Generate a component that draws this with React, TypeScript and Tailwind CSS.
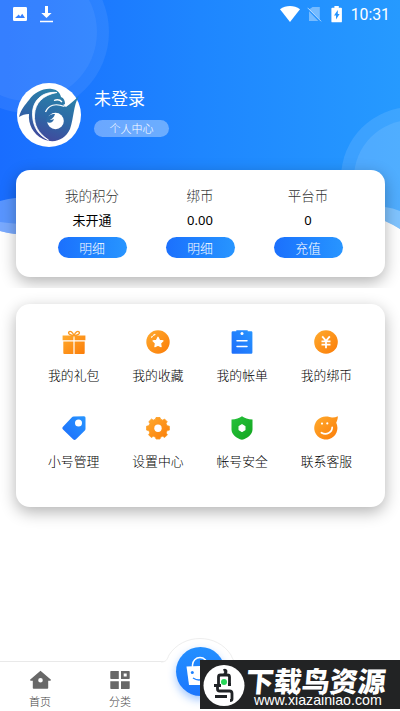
import React from 'react';

interface Balance {
    label: string;
    value: string;
    action: string;
}

interface MenuItem {
    label: string;
    icon: React.ReactNode;
}

const balances: Balance[] = [
    { label: '我的积分', value: '未开通', action: '明细' },
    { label: '绑币', value: '0.00', action: '明细' },
    { label: '平台币', value: '0', action: '充值' },
];

const menu: MenuItem[] = [
    { label: '我的礼包', icon: <GiftIcon /> },
    { label: '我的收藏', icon: <StarIcon /> },
    { label: '我的帐单', icon: <BillIcon /> },
    { label: '我的绑币', icon: <CoinIcon /> },
    { label: '小号管理', icon: <TagIcon /> },
    { label: '设置中心', icon: <GearIcon /> },
    { label: '帐号安全', icon: <ShieldIcon /> },
    { label: '联系客服', icon: <SmileIcon /> },
];

function Gradients() {
    return (
        <svg className="absolute" width="0" height="0">
            <defs>
                <linearGradient id="orange" x1="0" y1="0" x2="1" y2="1">
                    <stop offset="0" stopColor="#ffab2e" />
                    <stop offset="1" stopColor="#fb7c08" />
                </linearGradient>
                <linearGradient id="blue" x1="0" y1="1" x2="1" y2="0">
                    <stop offset="0" stopColor="#1d6dfb" />
                    <stop offset="1" stopColor="#2795ff" />
                </linearGradient>
                <linearGradient id="green" x1="0" y1="0" x2="1" y2="1">
                    <stop offset="0" stopColor="#27c23c" />
                    <stop offset="1" stopColor="#12a51f" />
                </linearGradient>
                <linearGradient id="dolphin" x1="0.2" y1="1" x2="0.6" y2="0">
                    <stop offset="0" stopColor="#46429a" />
                    <stop offset="0.5" stopColor="#2d68a6" />
                    <stop offset="1" stopColor="#2b83a8" />
                </linearGradient>
            </defs>
        </svg>
    );
}

function GiftIcon() {
    return (
        <svg width="24" height="24" viewBox="0 0 24 24">
            <path d="M12 5.600C10.800 2 8.200 .4 6.900 2c-1.300 1.800 1.600 3.400 5.100 3.600C15.500 5.400 18.400 3.800 17.100 2c-1.300-1.600-3.900 0-5.100 3.600z" fill="none" stroke="#fb9a22" strokeWidth="1.300" />
            <path d="M.6 5.600h10.800v4.600H.6zM12.600 5.600h10.800v4.600H12.600zM1.300 11.400h10.100V24H2.300a1 1 0 0 1-1-1zM12.600 11.400h10.100V23a1 1 0 0 1-1 1h-9.100z" fill="url(#orange)" />
        </svg>
    );
}

function StarIcon() {
    return (
        <svg width="24" height="24" viewBox="0 0 24 24">
            <circle cx="12" cy="12" r="11.700" fill="url(#orange)" />
            <path d="M12 7.200l1.500 3.100 3.500.5-2.500 2.400.6 3.500-3.100-1.600-3.100 1.600.6-3.500L7 10.800l3.500-.5z" fill="#fff" stroke="#fff" strokeWidth="1.200" strokeLinejoin="round" />
            <path d="M5.600 7.200l.7-.8M7.500 5.300l1.400-.9" stroke="#fff" strokeWidth="1.200" strokeLinecap="round" />
        </svg>
    );
}

function BillIcon() {
    return (
        <svg width="24" height="24" viewBox="0 0 24 24">
            <path d="M2.800 1.200H6.300V.3h11.400v.9h3.500a1.200 1.200 0 0 1 1.200 1.200v20.200a1.200 1.200 0 0 1-1.200 1.200H2.800a1.200 1.200 0 0 1-1.200-1.200V2.400a1.200 1.200 0 0 1 1.200-1.200z" fill="url(#blue)" />
            <circle cx="12" cy="3.600" r="1.500" fill="#fff" />
            <path d="M7 10.700h10M7 16.500h10" stroke="#fff" strokeWidth="1.500" strokeLinecap="round" />
        </svg>
    );
}

function CoinIcon() {
    return (
        <svg width="24" height="24" viewBox="0 0 24 24">
            <circle cx="12" cy="12" r="11.800" fill="url(#orange)" />
            <path d="M8.200 6.400l3.800 4.500 3.800-4.500M7.500 11.400h9M7.500 14.600h9M12 11v7.300" fill="none" stroke="#fff" strokeWidth="1.800" />
        </svg>
    );
}

function TagIcon() {
    return (
        <svg width="24" height="24" viewBox="0 0 24 24">
            <path d="M11.700.6L22 .2a1.500 1.500 0 0 1 1.500 1.500v11a3 3 0 0 1-.9 2.100l-8.600 8.400a2 2 0 0 1-2.900 0L1 13.500a2 2 0 0 1 0-2.800L9.700 1.600a3 3 0 0 1 2-1z" fill="url(#blue)" />
            <circle cx="16.500" cy="7" r="3.500" fill="#fff" />
        </svg>
    );
}

function GearIcon() {
    return (
        <svg width="24" height="24" viewBox="0 0 24 24">
            <path d="M9.500 3.200L10 1.500h4l.5 1.700 2.300 1L18.500 3l2.700 2.700-1.100 1.700 1 2.300 2.300.5v3.900l-2.200.5-1 2.300 1.200 1.900-2.700 2.700-2-1.200-2.200.9-.5 1.800h-4l-.5-1.800-2.200-.9-2 1.200-2.700-2.700 1.200-1.900-1-2.300-2.200-.5v-3.900l2.300-.5 1-2.300-1.100-1.700L5.500 3l1.700 1.200z" fill="url(#orange)" stroke="#fb9a22" strokeWidth=".8" strokeLinejoin="round" />
            <circle cx="12" cy="12.200" r="3.700" fill="#fff" />
        </svg>
    );
}

function ShieldIcon() {
    return (
        <svg width="24" height="24" viewBox="0 0 24 24">
            <path d="M12 .2c2.500 1.900 6.200 3.200 10.500 3.400v9.800c0 5-5 8.600-10.500 10.400C6.500 22 1.500 18.400 1.500 13.400V3.600C5.800 3.400 9.500 2.100 12 .2z" fill="url(#green)" />
            <path d="M12 8.700l2.900 1.700v3.400L12 15.500l-2.900-1.700v-3.400z" fill="#fff" stroke="#fff" strokeWidth="1.200" strokeLinejoin="round" />
        </svg>
    );
}

function SmileIcon() {
    return (
        <svg width="24" height="24" viewBox="0 0 24 24">
            <path d="M12 .4c2.700 0 4.500.7 6 1.100 2 .1 4-.3 5.900-1.200-.1 3-1 5-1.700 6.500A11.600 11.600 0 1 1 12 .4z" fill="url(#orange)" />
            <circle cx="8" cy="7.600" r="1.100" fill="#fff" />
            <circle cx="13.300" cy="7.400" r="1.100" fill="#fff" />
            <path d="M7.400 16.700c5 2.900 10.800-.1 10.800-5.400" fill="none" stroke="#fff" strokeWidth="1.700" strokeLinecap="round" />
        </svg>
    );
}

function StatusBar() {
    return (
        <div className="flex h-7 items-center justify-between pl-[13px] pr-[10px] text-white">
            <div className="flex items-center gap-[13px]">
                <svg width="14" height="16" viewBox="0 0 14 16">
                    <path fillRule="evenodd" d="M1.300 1h11.400A1.300 1.300 0 0 1 14 2.300v11.400a1.300 1.300 0 0 1-1.300 1.300H1.300A1.300 1.300 0 0 1 0 13.700V2.300A1.300 1.300 0 0 1 1.300 1zM2 12h10l-2.800-4.200-2 2.600-1.400-1.900z" fill="#fff" />
                </svg>
                <svg width="13" height="18" viewBox="0 0 13 18">
                    <path d="M5 1h3v7h3.600L6.500 13 1.300 8H5zM0 15.700h13v1.600H0z" fill="#fff" />
                </svg>
            </div>
            <div className="flex items-center">
                <svg width="20" height="16" viewBox="0 0 20 16">
                    <path d="M0 3.300C6-1 14-1 20 3.300L10 16z" fill="#fff" />
                </svg>
                <svg className="ml-[7px]" width="15" height="16" viewBox="0 0 15 16">
                    <path d="M5.500 1h7.300v12.500L2 3.600zM2 5.300L11.300 15H2z" fill="#fff" opacity=".38" />
                    <path d="M.6 1.800l13.500 13.500" stroke="#fff" strokeWidth="1" opacity=".6" />
                </svg>
                <svg className="ml-[9px]" width="12" height="17" viewBox="0 0 12 17">
                    <path fillRule="evenodd" d="M3.400 0h4.400v1.700H10a.9.900 0 0 1 .9.900v12.800a.9.900 0 0 1-.9.900H1.300a.9.900 0 0 1-.9-.9V2.600a.9.900 0 0 1 .9-.9h2.100zM6.800 3.900L3 9.600h2v4L8.600 8H6.800z" fill="#fff" />
                </svg>
                <span className="ml-[8px] pt-px font-['Roboto',sans-serif] text-[15.800px] leading-none">10:31</span>
            </div>
        </div>
    );
}

function Avatar() {
    return (
        <svg width="64" height="64" viewBox="0 0 64 64">
            <circle cx="32" cy="32" r="32" fill="#fff" />
            <path d="M2 34C4 26 8 22 12 17 18 9 26 5 35 6c6 1 8 4 9 8 3 1 4 4 4 7l-2 1 3 2c5-4 9-7 13-11-6 10-5 22-9 33-5 11-16 15-27 10-10-5-15-15-14-25-4 0-7 1-10 3z" fill="url(#dolphin)" />
            <circle cx="38.500" cy="38" r="8.300" fill="#fff" />
            <path d="M29 38c1-5 4-7 9-7-1 4-4 6-6 5 2 1 3 1 5 0-1 4-5 5-8 2z" fill="#2d6ca7" />
            <path d="M40 9.500C25 8 15 18 15.500 32c.5 13 7 21 16 25C21 50 17 42 17.500 32 18 20 26 12 40 9.500z" fill="#fff" stroke="#fff" strokeWidth=".8" />
            <path d="M28.500 29c3-7 10-9 19-5.500M37 17.500q5-2 8 1.500" stroke="#fff" strokeWidth="1.300" fill="none" />
        </svg>
    );
}

// blue backdrop with the bubbles and the wave along its lower edge
function Backdrop() {
    return (
        <svg className="absolute left-0 top-0" width="400" height="240" viewBox="0 0 400 240">
            <defs>
                <linearGradient id="sky" x1="0" y1="0" x2="1" y2="0">
                    <stop offset="0" stopColor="#196dff" />
                    <stop offset="0.5" stopColor="#1e86ff" />
                    <stop offset="1" stopColor="#269aff" />
                </linearGradient>
                <clipPath id="wave">
                    <path d="M0 0h400v229q-8-5-15-8L200 190 15 234q-8-1-15-3z" />
                </clipPath>
            </defs>
            <g clipPath="url(#wave)">
                <path d="M0 0h400v240H0z" fill="url(#sky)" />
                <circle cx="28" cy="32" r="81" fill="#fff" opacity=".07" />
                <circle cx="28" cy="32" r="69" fill="#fff" opacity=".06" />
                <circle cx="412" cy="178" r="71" fill="#fff" opacity=".11" />
                <circle cx="412" cy="178" r="58" fill="#fff" opacity=".1" />
                <path d="M0 201q7-2 15-3l100 0 200-5 70 14q8 1 15 4v30H0z" fill="#fff" opacity=".28" />
                <path d="M0 222q8 1 20 2v20H0z" fill="#fff" opacity=".2" />
            </g>
        </svg>
    );
}

function Profile() {
    return (
        <div className="flex gap-[13px] pl-[17px] pt-[55px] text-white">
            <Avatar />
            <div className="pt-[2px]">
                <p className="text-[17px] leading-[26px]">未登录</p>
                <div className="mt-[9px] flex h-[17px] w-[75px] items-center justify-center rounded-full bg-white/35 text-[11px] font-light">个人中心</div>
            </div>
        </div>
    );
}

function BalanceCard() {
    return (
        <div className="overflow-hidden px-[15.500px] pb-[11px] pt-[23px]">
            <div className="flex h-[107px] justify-center gap-[39px] rounded-[14px] bg-white pt-[15px] shadow-[0_5px_16px_rgba(0,0,0,0.3)]">
                {balances.map((item) => (
                    <div key={item.label} className="flex w-[69px] flex-col items-center">
                        <span className="text-[13.500px] font-light leading-5 text-[#333]">{item.label}</span>
                        <span className="mt-[5px] font-['Noto_Sans','Noto_Sans_CJK_SC',sans-serif] text-[13px] leading-5 text-black">{item.value}</span>
                        <button className="mt-[7px] flex h-[21px] w-[69px] items-center justify-center rounded-full bg-linear-to-r from-[#1c70fd] to-[#2895ff] text-[12.800px] font-light text-white">{item.action}</button>
                    </div>
                ))}
            </div>
        </div>
    );
}

function MenuCard() {
    return (
        <div className="mx-[15.500px] mt-[15.500px] grid h-[203.500px] grid-cols-4 content-start gap-y-[17px] rounded-[14px] bg-white px-[16px] pt-[26px] shadow-[0_5px_16px_rgba(0,0,0,0.3)]">
            {menu.map((item) => (
                <div key={item.label} className="flex h-[69px] flex-col items-center">
                    {item.icon}
                    <span className="mt-[11px] whitespace-nowrap text-[12.800px] font-light leading-5 text-black">{item.label}</span>
                </div>
            ))}
        </div>
    );
}

function TabBar() {
    return (
        <div className="relative flex h-[50px] border-t border-[#e9e9e9] bg-white text-[11px] font-light text-[#444]">
            <div className="flex w-20 flex-col items-center pt-[8px]">
                <svg width="21" height="20" viewBox="0 0 21 20">
                    <path fillRule="evenodd" d="M10.500.7L21 9.800l-.5.900h-2.300V18a.8.800 0 0 1-.8.800H3.600a.8.800 0 0 1-.8-.8v-7.300H.5l-.5-.9zM10.500 8a2.300 2.300 0 1 0 0 4.600 2.300 2.300 0 0 0 0-4.600z" fill="#686868" />
                </svg>
                <span className="mt-[3px] leading-4">首页</span>
            </div>
            <div className="flex w-20 flex-col items-center pt-[8px]">
                <svg width="20" height="20" viewBox="0 0 20 20">
                    <path fillRule="evenodd" d="M1 1h7.800v8H1a.7.700 0 0 1-.7-.7V1.700A.7.700 0 0 1 1 1zM11 1h8a.7.700 0 0 1 .7.700v6.600a.7.700 0 0 1-.7.700h-8zM13.700 3.500v3h3v-3zM.3 11.200h8.500V19H1a.7.700 0 0 1-.7-.7zM11 11.200h8.700v7.100a.7.700 0 0 1-.7.700h-8z" fill="#686868" />
                </svg>
                <span className="mt-[3px] leading-4">分类</span>
            </div>
            <svg className="absolute left-[160px] top-[-26px]" width="80" height="75" viewBox="0 0 80 75">
                <path d="M1 26c5 0 6-2 8-7C23-3 57-3 71 19c2 5 3 7 8 7" fill="#fff" stroke="#eee" strokeWidth="1" />
                <path d="M0 27h80v48H0z" fill="#fff" />
            </svg>
            <div className="absolute left-[175.500px] top-[-15px] h-[49px] w-[49px] rounded-full bg-linear-to-b from-[#238fff] to-[#1d76fd] shadow-[0_4px_8px_rgba(30,120,255,0.4)]">
                <svg width="49" height="49" viewBox="0 0 49 49">
                    <path d="M16.500 20v-2a7.500 7.500 0 0 1 15 0v2" fill="none" stroke="#fff" strokeWidth="1.500" />
                    <path d="M10.500 19.500q13.500-1 27 0l-1.500 18.500h-23z" fill="#fff" />
                    <circle cx="16.300" cy="25.500" r="1.500" fill="#1f82ff" />
                    <path d="M17 31q6 4 12 0" fill="none" stroke="#1f82ff" strokeWidth="1.500" />
                </svg>
            </div>
        </div>
    );
}

function Banner() {
    return (
        <div className="absolute left-[200px] top-[660px] flex h-[49px] w-[200px] bg-[#222324] pl-[3px] text-white">
            <svg className="mt-[5px] shrink-0" width="42" height="41" viewBox="0 0 42 41">
                <circle cx="21" cy="20.500" r="20.500" fill="#fff" />
                <path d="M20.500 5.500q3-1 2.500 1.500l-1.500 2.500M15.500 19.500V12q0-2 2-2h7q2 0 2 2v7M11 20.500h7M25 19.500h3M14.500 20.500v3.500q0 2 2 2h10q2.500 0 2.500 2.500V34q0 1.500-2 1.500M12 31.500h12" fill="none" stroke="#202326" strokeWidth="2.800" />
                <circle cx="21" cy="17" r="3" fill="#27d858" />
            </svg>
            <div className="pl-px pt-[6px]">
                <p className="origin-left skew-x-[-5deg] whitespace-nowrap text-[28px] font-black leading-7">下载鸟资源</p>
                <p className="pl-[8px] font-['Liberation_Sans',sans-serif] text-[14.200px] leading-[13px]">www.xiazainiao.com</p>
            </div>
        </div>
    );
}

export default function App() {
    return (
        <div className="relative flex h-[711px] w-[400px] flex-col overflow-hidden bg-white font-['Noto_Sans_CJK_SC',sans-serif]">
            <Gradients />
            <Backdrop />
            <div className="relative flex grow flex-col">
                <StatusBar />
                <Profile />
                <BalanceCard />
                <MenuCard />
            </div>
            <TabBar />
            <Banner />
        </div>
    );
}
